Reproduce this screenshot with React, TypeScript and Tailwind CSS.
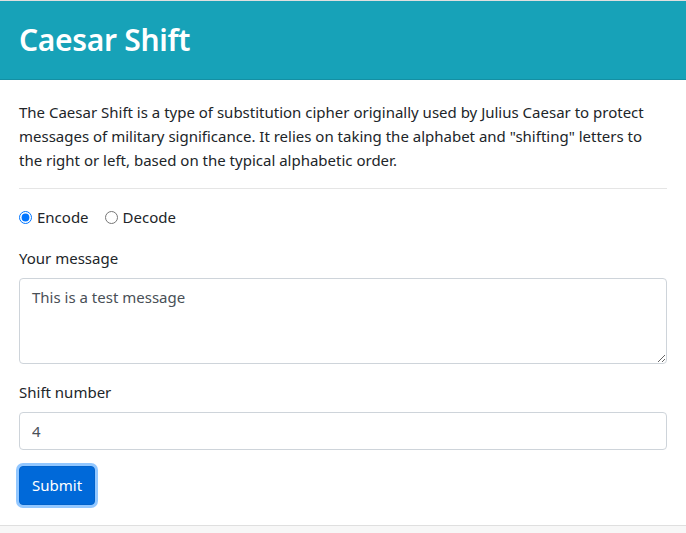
import React from "react";

export default function App() {
  return (
    <div className="w-[686px] h-[533px] overflow-hidden bg-white text-[#212529]" style={{ fontFamily: '"Noto Sans", "Open Sans", sans-serif' }}>
      <div className="border-t border-[#dfdfdf]">
        <div className="bg-[#17a2b8] border-b border-[#148fa3] px-[19px] h-[79px] flex items-center">
          <h1 className="text-white text-[30px] font-semibold leading-none tracking-[-0.3px]">Caesar Shift</h1>
        </div>
        <div className="px-[19px] pt-[20px] pb-[20px]">
          <p className="text-[15px] leading-6 mb-4">
            The Caesar Shift is a type of substitution cipher originally used by Julius Caesar to protect messages of military significance. It relies on taking the alphabet and "shifting" letters to the right or left, based on the typical alphabetic order.
          </p>
          <hr className="border-0 border-t border-[#e5e5e5] mb-4" />
          <div className="flex items-center h-6 mb-[17px] text-[15px]">
            <label className="flex items-center mr-4">
              <input type="radio" name="mode" defaultChecked className="w-[13px] h-[13px] m-0 mr-[5px] accent-[#0075ff]" />
              <span>Encode</span>
            </label>
            <label className="flex items-center">
              <input type="radio" name="mode" className="w-[13px] h-[13px] m-0 mr-[5px]" />
              <span>Decode</span>
            </label>
          </div>
          <div className="text-[15px] leading-6 mb-2">Your message</div>
          <textarea
            rows={3}
            defaultValue="This is a test message"
            className="block w-full h-[86px] border border-[#ced4da] rounded-[4px] px-3 py-[6px] text-[15px] leading-6 text-[#495057] outline-none mb-4"
          />
          <div className="text-[15px] leading-6 mb-2">Shift number</div>
          <input
            type="text"
            defaultValue="4"
            className="block w-full h-[38px] border border-[#ced4da] rounded-[4px] px-3 text-[15px] text-[#495057] outline-none mb-4"
          />
          <button className="h-[39px] px-3 rounded-[4px] bg-[#0069d9] border border-[#0062cc] text-white text-[15px] shadow-[0_0_0_3px_rgba(38,143,255,0.5)]">
            Submit
          </button>
        </div>
        <div className="border-t border-[#dfdfdf] bg-[#f7f7f7] h-[40px]" />
      </div>
    </div>
  );
}
